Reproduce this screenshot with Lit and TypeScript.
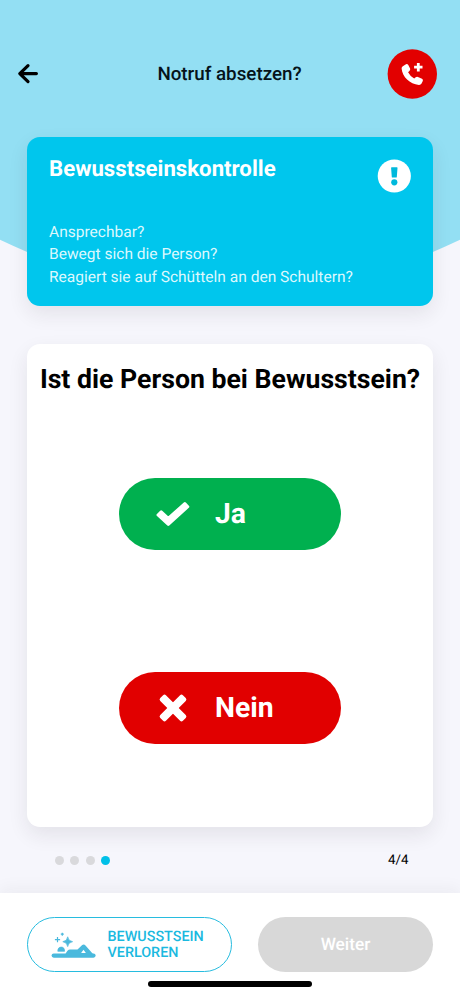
import { LitElement, html, css } from "lit";
import { customElement, property } from "lit/decorators.js";
import { classMap } from "lit/directives/class-map.js";

@customElement("answer-button")
class AnswerButton extends LitElement {
  @property() kind = "yes";
  @property() label = "";

  static styles = css`
    :host { display: block; }
    .answer {
      box-sizing: border-box; width: 222px; height: 72px; border: 0; border-radius: 36px;
      display: flex; align-items: center; padding: 0 0 0 36px; gap: 24px;
      color: #fff; font: 700 28.300px/36px Roboto, sans-serif; background: #00b04f;
      text-rendering: geometricPrecision;
    }
    .no { background: #e10000; }
    svg { width: 36px; height: 36px; flex: none; }
  `;

  render() {
    const no = this.kind === "no";
    return html`<button class=${classMap({ answer: true, no })}>
      ${no
        ? html`<svg viewBox="0 0 36 36" fill="#fff">
            <rect x="2" y="14" width="32" height="8" rx="2" transform="rotate(45 18 18)"/>
            <rect x="2" y="14" width="32" height="8" rx="2" transform="rotate(-45 18 18)"/>
          </svg>`
        : html`<svg viewBox="0 0 36 36" fill="#fff" stroke="#fff" stroke-width="3" stroke-linejoin="round">
            <path d="M3 19 6.200 15.800 13.200 22.400 29.800 7.600 32.800 10.700 13.300 28.400Z"/>
          </svg>`}
      <span>${this.label}</span>
    </button>`;
  }
}

@customElement("app-root")
class AppRoot extends LitElement {
  static styles = css`
    :host {
      display: flex; flex-direction: column; box-sizing: border-box; position: relative; overflow: hidden;
      width: 460px; height: 996px; background: #f6f6fc; color: #000; font-family: Roboto, sans-serif;
      text-rendering: geometricPrecision;
    }
    .backdrop {
      position: absolute; left: -303px; top: -774px; width: 1066px; height: 1066px;
      border-radius: 50%; background: #93dff3;
    }
    header {
      position: relative; display: grid; grid-template-columns: 50px 1fr 50px; align-items: center;
      height: 50px; padding: 49px 23px 0 17px;
    }
    header h1 { margin: 0; padding-left: 5px; text-align: center; font: 500 18.800px/24px Roboto, sans-serif; color: #06131a; }
    .back { width: 22px; height: 22px; display: block; }
    .call { width: 50px; height: 50px; display: block; }
    .info {
      position: relative; box-sizing: border-box; margin: 38px 27px 0; height: 168.500px; border-radius: 13px;
      padding: 18px 22px 0; background: #00c6ed; color: #fff; box-shadow: 0 8px 20px rgba(40, 30, 40, .09);
    }
    .top { display: flex; justify-content: space-between; height: 66px; }
    .top h2 { margin: 0; font: 700 22.200px/28px Roboto, sans-serif; }
    .top svg { width: 34px; height: 34px; margin-top: 4px; }
    .info p { margin: 0; font-size: 15.540px; line-height: 22.300px; color: #dcf8fd; }
    main {
      position: relative; box-sizing: border-box; margin: 38.500px 27px 0; height: 482.500px; border-radius: 13px;
      background: #fff; box-shadow: 0 8px 20px rgba(40, 30, 40, .09);
      display: flex; flex-direction: column; align-items: center; padding-top: 17px;
    }
    main h2 { margin: 0; font: 700 26.650px/36px Roboto, sans-serif; white-space: nowrap; }
    .answers { display: flex; flex-direction: column; gap: 122px; margin-top: 80.500px; }
    .pager { display: flex; justify-content: space-between; align-items: center; height: 20px; margin: 23.500px 51.500px 0 54.500px; }
    .dots { display: flex; gap: 6.500px; }
    .dot { width: 9px; height: 9px; border-radius: 50%; background: #d9d9dc; }
    .dot.on { background: #00c0e8; }
    .count { font-size: 13.300px; }
    footer {
      position: relative; box-sizing: border-box; margin-top: auto; height: 103.500px; background: #fff;
      display: flex; gap: 26.500px; padding: 24.500px 27px 0; box-shadow: 0 -4px 16px rgba(40, 30, 40, .05);
    }
    footer button { box-sizing: border-box; height: 55px; border-radius: 28px; padding: 0; font-family: Roboto, sans-serif; text-rendering: geometricPrecision; }
    .lost {
      width: 204.500px; display: flex; align-items: center; border: 1.300px solid #27bcdf; background: #fff;
      color: #1bb9df; font-size: 14.370px; line-height: 15.500px; font-weight: 500; text-align: left;
    }
    .lost svg { width: 46px; height: 28px; margin: 0 10.500px 0 23px; }
    .next { width: 175px; border: 0; background: #d8d8d8; color: #fff; font-size: 17.300px; font-weight: 500; }
    .home { position: absolute; left: 148px; top: 88.500px; width: 164px; height: 5.500px; border-radius: 3px; background: #000; }
  `;

  render() {
    return html`
      <div class="backdrop"></div>
      <header>
        <svg class="back" viewBox="0 0 22 22" fill="none" stroke="#000" stroke-width="3.200" stroke-linecap="round" stroke-linejoin="round"><path d="M11 2.600 2.800 10.600l8.200 8M3 10.600H19.400"/></svg>
        <h1>Notruf absetzen?</h1>
        <svg class="call" viewBox="0 0 50 50">
          <circle cx="25.300" cy="25" r="24.700" fill="#e20000"/>
          <path fill="#fff" d="M15.800 17.200 19 15.200Q20.400 14.600 21.300 16L23.100 19.600Q23.600 20.900 22.400 22L21.100 23.200Q23.200 27.300 27.200 29.600L28.700 28.300Q29.700 27.400 30.900 27.900L35 29.800Q36.400 30.600 35.800 32L34.400 34.800Q33.700 36 31.900 35.900C22.800 35.300 15.300 28 14.600 19.600Q14.500 18 15.800 17.200Z"/>
          <path d="M31.300 14v8.400M27.100 18.200H35.500" stroke="#fff" stroke-width="2.800"/>
        </svg>
      </header>
      <section class="info">
        <div class="top">
          <h2>Bewusstseinskontrolle</h2>
          <svg viewBox="0 0 34 34">
            <circle cx="17.300" cy="17" r="16.600" fill="#fff"/>
            <path d="M14.600 8.300h5.400q.5 0 .5.600l-.7 9q0 .7-.7.700h-3.600q-.7 0-.7-.700l-.7-9q0-.6.500-.6Z" fill="#00b9dc"/>
            <circle cx="17.300" cy="23.300" r="3.100" fill="#00b9dc"/>
          </svg>
        </div>
        <p>Ansprechbar?</p>
        <p>Bewegt sich die Person?</p>
        <p>Reagiert sie auf Schütteln an den Schultern?</p>
      </section>
      <main>
        <h2>Ist die Person bei Bewusstsein?</h2>
        <div class="answers">
          <answer-button kind="yes" label="Ja"></answer-button>
          <answer-button kind="no" label="Nein"></answer-button>
        </div>
      </main>
      <div class="pager">
        <div class="dots">${[1, 2, 3, 4].map((n) => html`<span class=${classMap({ dot: true, on: n === 4 })}></span>`)}</div>
        <span class="count">4/4</span>
      </div>
      <footer>
        <button class="lost">
          <svg viewBox="0 0 46 28" fill="#4ab9dd">
            <rect x=".6" y="22.500" width="44" height="4.200" rx="2.100"/>
            <path d="M14.500 23Q16.200 18.600 19 18.400H26.500L31.200 14Q33 12.700 34.500 14.500L42 23Z"/>
            <path d="M6.800 20.300A3.400 4.200 0 0 1 13.600 20.300ZM16.700 5.800Q17.200 10.100 21.600 10.700Q17.200 11.300 16.700 15.600Q16.200 11.300 11.800 10.700Q16.200 10.100 16.700 5.800Z" stroke="#4ab9dd" stroke-width=".7"/>
            <path d="M6.500 6V11.200M3.900 8.600H9.100M11.300 1.700V4.700M9.800 3.200H12.800" stroke="#4ab9dd" stroke-width="1.200"/>
            <path fill="#fff" d="m32.500 18.700 2.400 3.200h-4.800Z"/>
          </svg>
          <span>BEWUSSTSEIN<br>VERLOREN</span>
        </button>
        <button class="next">Weiter</button>
        <div class="home"></div>
      </footer>`;
  }
}
